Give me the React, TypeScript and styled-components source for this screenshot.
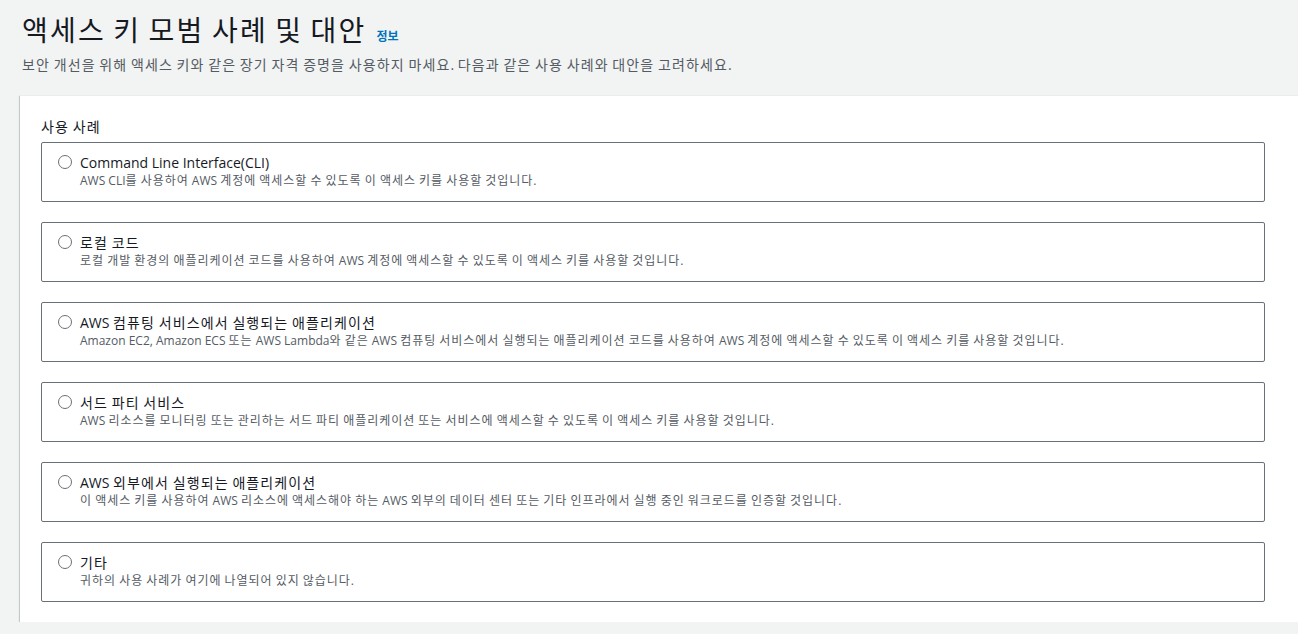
import React from "react";
import styled, { createGlobalStyle } from "styled-components";

interface UseCase {
  title: string;
  description: string;
}

const useCases: UseCase[] = [
  {
    title: "Command Line Interface(CLI)",
    description: "AWS CLI를 사용하여 AWS 계정에 액세스할 수 있도록 이 액세스 키를 사용할 것입니다.",
  },
  {
    title: "로컬 코드",
    description:
      "로컬 개발 환경의 애플리케이션 코드를 사용하여 AWS 계정에 액세스할 수 있도록 이 액세스 키를 사용할 것입니다.",
  },
  {
    title: "AWS 컴퓨팅 서비스에서 실행되는 애플리케이션",
    description:
      "Amazon EC2, Amazon ECS 또는 AWS Lambda와 같은 AWS 컴퓨팅 서비스에서 실행되는 애플리케이션 코드를 사용하여 AWS 계정에 액세스할 수 있도록 이 액세스 키를 사용할 것입니다.",
  },
  {
    title: "서드 파티 서비스",
    description:
      "AWS 리소스를 모니터링 또는 관리하는 서드 파티 애플리케이션 또는 서비스에 액세스할 수 있도록 이 액세스 키를 사용할 것입니다.",
  },
  {
    title: "AWS 외부에서 실행되는 애플리케이션",
    description:
      "이 액세스 키를 사용하여 AWS 리소스에 액세스해야 하는 AWS 외부의 데이터 센터 또는 기타 인프라에서 실행 중인 워크로드를 인증할 것입니다.",
  },
  {
    title: "기타",
    description: "귀하의 사용 사례가 여기에 나열되어 있지 않습니다.",
  },
];

const GlobalStyle = createGlobalStyle`
  html, body {
    margin: 0;
    padding: 0;
    background: #f2f3f3;
    overflow: hidden;
  }
  body {
    font-family: "Open Sans", "Noto Sans CJK KR", sans-serif;
    color: #16191f;
  }
`;

// Hangul glyphs in the reference font are a little wider than Noto's
const HangulRun = styled.span`
  letter-spacing: 0.08em;
`;

const Ko: React.FC<{ text: string }> = ({ text }) => (
  <>
    {text.split(/([\uAC00-\uD7A3]+)/).map((part, i) =>
      /[\uAC00-\uD7A3]/.test(part) ? <HangulRun key={i}>{part}</HangulRun> : part
    )}
  </>
);

const Page = styled.div`
  padding: 10px 0 0 20px;
`;

const Header = styled.header`
  padding-left: 2px;
  margin-bottom: 19px;
`;

const TitleRow = styled.div`
  display: flex;
  align-items: baseline;
  gap: 10px;
`;

const Title = styled.h1`
  margin: 0;
  font-size: 28px;
  line-height: 40px;
  font-weight: 400;
  color: #16191f;
`;

const InfoLink = styled.a`
  font-size: 12px;
  font-weight: 700;
  color: #0073bb;
  text-decoration: none;
`;

const Description = styled.p`
  margin: 4px 0 0;
  font-size: 14px;
  line-height: 22px;
  color: #545b64;
`;

const Card = styled.section`
  background: #ffffff;
  border-top: 1px solid #eaeded;
  box-shadow: 0 1px 1px 0 rgba(0, 28, 36, 0.3),
    -1px 1px 1px 0 rgba(0, 28, 36, 0.15);
  padding: 21px 33px 20px 21px;
`;

const GroupLabel = styled.div`
  font-size: 14px;
  line-height: 20px;
  color: #16191f;
  margin-bottom: 5px;
`;

const OptionList = styled.div`
  display: flex;
  flex-direction: column;
  gap: 20px;
`;

const Option = styled.label`
  display: flex;
  align-items: flex-start;
  gap: 8px;
  border: 1px solid #687078;
  border-radius: 2px;
  padding: 10px 16px 12px 16px;
  cursor: pointer;
`;

const Radio = styled.span`
  flex: none;
  width: 14px;
  height: 14px;
  box-sizing: border-box;
  border: 1.5px solid #687078;
  border-radius: 50%;
  margin-top: 2px;
`;

const OptionText = styled.div`
  display: flex;
  flex-direction: column;
`;

const OptionTitle = styled.span`
  font-size: 14px;
  line-height: 19px;
  color: #16191f;
`;

const OptionDescription = styled.span`
  font-size: 12px;
  line-height: 17px;
  color: #545b64;
`;

const App: React.FC = () => {
  return (
    <Page>
      <GlobalStyle />
      <Header>
        <TitleRow>
          <Title>
            <Ko text="액세스 키 모범 사례 및 대안" />
          </Title>
          <InfoLink href="#">정보</InfoLink>
        </TitleRow>
        <Description>
          <Ko text="보안 개선을 위해 액세스 키와 같은 장기 자격 증명을 사용하지 마세요. 다음과 같은 사용 사례와 대안을 고려하세요." />
        </Description>
      </Header>

      <Card>
        <GroupLabel>
          <Ko text="사용 사례" />
        </GroupLabel>
        <OptionList>
          {useCases.map((item) => (
            <Option key={item.title}>
              <Radio />
              <OptionText>
                <OptionTitle>
                  <Ko text={item.title} />
                </OptionTitle>
                <OptionDescription>
                  <Ko text={item.description} />
                </OptionDescription>
              </OptionText>
            </Option>
          ))}
        </OptionList>
      </Card>
    </Page>
  );
};

export default App;
